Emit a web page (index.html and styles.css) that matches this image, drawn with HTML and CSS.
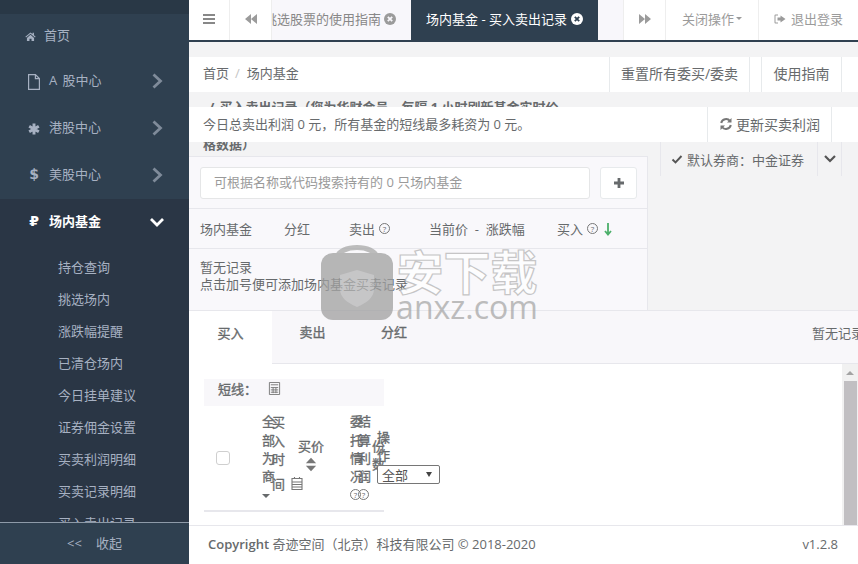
FILE: index.html
```html
<!DOCTYPE html>
<html lang="zh-CN">
  <head>
    <meta charset="UTF-8" />
    <meta name="viewport" content="width=device-width, initial-scale=1.0" />
    <title>场内基金 - 买入卖出记录</title>
    <link rel="stylesheet" href="styles.css">
  </head>
  <body>
    <!-- 左侧菜单 -->
    <aside class="sidebar">
      <div class="side-top"></div>
      <nav class="side-nav">
        <a class="nav-item nav-home">
          <svg class="nav-icon home-icon" viewBox="0 0 16 16"><path d="M8 2 0.5 8.400l1 1.100L8 4l6.500 5.500 1-1.100-2.500-2.200V2.500h-2v2zM2.800 10v4.500h3.700v-3.300h3v3.300h3.700V10L8 5.500z"/></svg>
          <span>首页</span>
        </a>
        <a class="nav-item">
          <svg class="nav-icon file-icon" viewBox="2 0 12 16"><path class="line" d="M2.600 .6h6.800l4 4v10.800H2.600zM9.400 .6v4h4"/></svg>
          <span class="nav-a">A 股中心</span>
          <svg class="nav-arrow" viewBox="0 0 12 16"><path d="M2.500 1.500 9.500 8l-7 6.500"/></svg>
        </a>
        <a class="nav-item">
          <svg class="nav-icon" viewBox="1 1 14 14"><path class="thick" d="M8 1.500v13M2.400 4.700l11.200 6.600M13.600 4.700 2.400 11.300"/></svg>
          <span>港股中心</span>
          <svg class="nav-arrow" viewBox="0 0 12 16"><path d="M2.500 1.500 9.500 8l-7 6.500"/></svg>
        </a>
        <a class="nav-item">
          <b class="nav-glyph">$</b>
          <span>美股中心</span>
          <svg class="nav-arrow" viewBox="0 0 12 16"><path d="M2.500 1.500 9.500 8l-7 6.500"/></svg>
        </a>
        <div class="nav-open">
          <a class="nav-item nav-active">
            <b class="nav-glyph">₽</b>
            <span>场内基金</span>
            <svg class="nav-arrow nav-arrow-down" viewBox="0 0 16 12"><path d="M2 3l6 6 6-6"/></svg>
          </a>
          <ul class="sub-menu">
            <li>持仓查询</li>
            <li>挑选场内</li>
            <li>涨跌幅提醒</li>
            <li>已清仓场内</li>
            <li>今日挂单建议</li>
            <li>证券佣金设置</li>
            <li>买卖利润明细</li>
            <li>买卖记录明细</li>
            <li>买入卖出记录</li>
          </ul>
        </div>
      </nav>
      <div class="side-foot"><span>&lt;&lt;</span><span>收起</span></div>
    </aside>

    <main class="main">
      <!-- 顶部页签 -->
      <header class="tabbar">
        <div class="tab-btn tab-menu">
          <svg class="ico-14" viewBox="0 0 14 14"><path class="bars" d="M1 3h12M1 7h12M1 11h12"/></svg>
        </div>
        <div class="tab-btn tab-prev">
          <svg class="ico-14" viewBox="0 0 14 14"><path class="solid" d="M7 2v10L1 7zM13 2v10L7 7z"/></svg>
        </div>
        <div class="tab tab-plain">
          <span class="tab-clip">挑选股票的使用指南</span>
          <svg class="ico-12" viewBox="0 0 12 12"><circle class="solid" cx="6" cy="6" r="6"/><path class="cross" d="M3.800 3.800l4.400 4.400M8.200 3.800 3.800 8.200"/></svg>
        </div>
        <div class="tab tab-current">
          <span>场内基金 - 买入卖出记录</span>
          <svg class="ico-12" viewBox="0 0 12 12"><circle class="solid-white" cx="6" cy="6" r="6"/><path class="cross-dark" d="M3.800 3.800l4.400 4.400M8.200 3.800 3.800 8.200"/></svg>
        </div>
        <div class="tab-space"></div>
        <div class="tab-btn tab-next">
          <svg class="ico-14" viewBox="0 0 14 14"><path class="solid" d="M1 2v10l6-5zM7 2v10l6-5z"/></svg>
        </div>
        <div class="tab-btn tab-close">关闭操作<i class="caret"></i></div>
        <div class="tab-btn tab-logout">
          <svg class="ico-12" viewBox="0 0 12 12"><path class="solid" d="M4 1.500H1.500A1 1 0 0 0 .5 2.500v7a1 1 0 0 0 1 1H4V9.500H1.500v-7H4zM6.500 2.500V4.500H3.500v3h3v2L11.500 6z"/></svg>
          退出登录
        </div>
      </header>

      <!-- 面包屑 -->
      <section class="crumb">
        <div class="crumb-path">首页<i>/</i>场内基金</div>
        <div class="crumb-actions">
          <a class="crumb-btn crumb-reset">重置所有委买/委卖</a>
          <a class="crumb-btn crumb-guide">使用指南</a>
        </div>
      </section>

      <section class="upper">
        <div class="upper-left">
          <h1 class="page-title"><em>/</em>买入卖出记录（您为华财会员，每隔 1 小时刷新基金实时价<br />格数据）</h1>
          <div class="fund-panel">
            <div class="search-row">
              <div class="search-input">可根据名称或代码搜索持有的 0 只场内基金</div>
              <div class="add-btn">
                <svg viewBox="0 0 12 12"><path d="M6 1v10M1 6h10"/></svg>
              </div>
            </div>
            <div class="fund-head">
              <span>场内基金</span>
              <span>分红</span>
              <span>卖出<i class="q">?</i></span>
              <span>当前价 &nbsp;- &nbsp;涨跌幅</span>
              <span>买入<i class="q">?</i>
                <svg class="arrow-down" viewBox="0 0 8 14"><path d="M4 1v11M1 9l3 3.500L7 9"/></svg>
              </span>
            </div>
            <div class="fund-empty">暂无记录<br />点击加号便可添加场内基金买卖记录</div>
          </div>
        </div>
        <div class="upper-right">
          <div class="broker">
            <div class="broker-name">
              <svg class="ico-12" viewBox="0 0 12 12"><path class="tick" d="M1.500 6.500 4.500 9.500 10.500 3"/></svg>
              默认券商：中金证券
            </div>
            <div class="broker-more">
              <svg viewBox="0 0 14 10"><path d="M2 2l5 5 5-5"/></svg>
            </div>
          </div>
        </div>
        <!-- 盖在标题上的利润条 -->
        <div class="profit-bar">
          <span class="profit-text">今日总卖出利润 0 元，所有基金的短线最多耗资为 0 元。</span>
          <a class="profit-btn">
            <svg class="ico-14" viewBox="0 0 14 14"><path class="refresh" d="M2.200 6A5 5 0 0 1 11 4M11.800 8A5 5 0 0 1 3 10"/><path class="solid" d="M12.500 1v4.500H8zM1.500 13V8.500H6z"/></svg>
            更新买卖利润
          </a>
        </div>
      </section>

      <!-- 买入 / 卖出 / 分红 -->
      <section class="deal-tabs">
        <a class="deal-tab deal-on">买入</a>
        <a class="deal-tab deal-sell">卖出</a>
        <a class="deal-tab">分红</a>
        <span class="deal-none">暂无记录</span>
      </section>

      <section class="deal-body">
        <div class="deal-list">
          <div class="short-bar">短线：
            <svg class="calc" viewBox="0 0 14 14"><path d="M1.500.5h11v13h-11z"/><path d="M3 3h8M3 6h8M3 8.500h8M3 11h8M5.500 6v6M8.500 6v6"/></svg>
          </div>
          <div class="deal-head">
            <i class="check"></i>
            <div class="th th-all">全部为商<i class="caret th-caret"></i></div>
            <div class="th th-time">买入时
              <div class="th-time-end">间
                <svg class="date" viewBox="0 0 12 14"><path d="M1 2.500h10v11H1z"/><path d="M1 6h10M1 8.500h10M1 11h10M3.500 1v2M8.500 1v2"/></svg>
              </div>
            </div>
            <div class="th-price">买价
              <svg class="sort" viewBox="0 0 14 16"><path d="M7 0l6 6.500H1zM7 16l-6-6.500h12z"/></svg>
            </div>
            <div class="th th-entrust">委托情况<span class="q-pair"><i class="q">?</i></span></div>
            <div class="th th-settle">结算利润<span class="q-pair"><i class="q">?</i></span></div>
            <div class="th th-share">份数</div>
            <div class="th-op">
              <div class="th">操作</div>
              <div class="select-box">全部<i class="select-arrow"></i></div>
            </div>
          </div>
        </div>
        <div class="scrollbar">
          <div class="scroll-up"><i></i></div>
          <div class="scroll-thumb"></div>
        </div>
      </section>

      <footer class="foot">
        <span>Copyright <small>奇迹空间（北京）科技有限公司 © 2018-2020</small></span>
        <span class="version">v1.2.8</span>
      </footer>
    </main>

    <!-- 水印 -->
    <div class="watermark">
      <svg class="wm-bag" viewBox="0 0 72 80">
        <path class="wm-handle" d="M16 18C18 4 54 4 56 18"/>
        <rect class="wm-box" x="0" y="13" width="72" height="67" rx="12"/>
        <path class="wm-shield" d="M36 30l17 5v14c0 9-8 14-17 18-9-4-17-9-17-18V35z"/>
      </svg>
      <div class="wm-text">
        <div class="wm-cn">安下载</div>
        <div class="wm-en">anxz.com</div>
      </div>
    </div>
  </body>
</html>
```

FILE: styles.css
```css
* {
  padding: 0;
  margin: 0;
  box-sizing: border-box;
}
body {
  width: 858px;
  height: 564px;
  display: flex;
  overflow: hidden;
  position: relative;
  background-color: #f3f3f4;
  color: #676a6c;
  font-family: "Open Sans", "Noto Sans CJK SC", sans-serif;
  font-size: 13px;
}
i,
em {
  font-style: normal;
}
ul {
  list-style: none;
}
svg {
  display: block;
  flex: none;
}
.ico-14 {
  width: 14px;
  height: 14px;
}
.ico-12 {
  width: 12px;
  height: 12px;
}
.solid {
  fill: #9b9b9b;
}
.solid-white {
  fill: #fff;
}
.cross,
.cross-dark {
  fill: none;
  stroke: #f8f7fb;
  stroke-width: 1.8;
}
.cross-dark {
  stroke: #2f4050;
}

/* 左侧菜单 */
.sidebar {
  width: 189px;
  flex: none;
  display: flex;
  flex-direction: column;
  background-color: #2f4050;
  color: #a7b1c2;
}
.side-top {
  height: 14px;
  background-color: #293846;
}
.side-nav {
  flex: 1;
  min-height: 0;
  overflow: hidden;
}
.nav-item {
  height: 47px;
  display: flex;
  align-items: center;
  padding-left: 28px;
  position: relative;
}
.nav-item span {
  padding-bottom: 5px;
}
.nav-a {
  word-spacing: 2px;
}
.nav-home {
  height: 44px;
  padding-left: 25px;
}
.nav-home span {
  padding-bottom: 3px;
}
.nav-icon {
  width: 12px;
  height: 12px;
  margin-right: 9px;
  fill: #a7b1c2;
}
.file-icon {
  height: 16px;
}
.home-icon {
  width: 11px;
  height: 11px;
  margin-right: 8px;
}
.nav-icon .line {
  fill: none;
  stroke: #a7b1c2;
  stroke-width: 1.2;
}
.nav-icon .thick {
  fill: none;
  stroke: #a7b1c2;
  stroke-width: 3.4;
}
.nav-glyph {
  width: 12px;
  margin-right: 9px;
  padding-bottom: 4px;
  font-family: "DejaVu Sans", sans-serif;
  font-size: 14px;
  text-align: center;
}
.nav-arrow {
  position: absolute;
  left: 151px;
  top: 15px;
  width: 12px;
  height: 16px;
  fill: none;
  stroke: #7f8b9a;
  stroke-width: 2.8;
}
.nav-open {
  background-color: #2a3645;
}
.nav-active {
  color: #fff;
  font-weight: 700;
}
.nav-active .nav-glyph {
  color: #fff;
}
.nav-arrow-down {
  left: 149px;
  top: 17px;
  width: 16px;
  height: 12px;
  stroke: #fff;
  stroke-width: 2.8;
}
.sub-menu {
  padding-top: 5px;
}
.sub-menu li {
  height: 32px;
  line-height: 32px;
  padding-left: 58px;
}
.side-foot {
  height: 42px;
  flex: none;
  display: flex;
  align-items: center;
  gap: 14px;
  padding-left: 67px;
  padding-bottom: 2px;
  border-top: 1px solid #8e9aa8;
  background-color: #2f4050;
}

/* 右侧主体 */
.main {
  flex: 1;
  min-width: 0;
  display: flex;
  flex-direction: column;
}
.tabbar {
  height: 42px;
  flex: none;
  display: flex;
  background-color: #fff;
  border-bottom: 2px solid #2f4050;
  margin-bottom: 15px;
}
.tab-btn {
  display: flex;
  align-items: center;
  justify-content: center;
  padding-bottom: 3px;
  color: #9b9b9b;
  border-right: 1px solid #eeeeee;
}
.tab-menu {
  width: 41px;
}
.tab-menu .bars {
  fill: none;
  stroke: #888;
  stroke-width: 2;
}
.tab-prev {
  width: 42px;
}
.tab-next {
  width: 43px;
  border-left: 1px solid #eeeeee;
}
.tab-close {
  width: 93px;
}
.tab-logout {
  flex: 1;
  gap: 5px;
  border-right: 0;
}
.caret {
  display: inline-block;
  margin-left: 2px;
  border-top: 3px solid #9b9b9b;
  border-left: 3px solid transparent;
  border-right: 3px solid transparent;
}
.tab {
  display: flex;
  align-items: center;
  gap: 3px;
  padding-bottom: 3px;
}
.tab-plain {
  width: 139px;
  padding-right: 15px;
  background-color: #f8f7fb;
  color: #888;
  justify-content: flex-end;
}
.tab-clip {
  overflow: hidden;
  white-space: nowrap;
  width: 109px;
  direction: rtl;
}
.tab-current {
  width: 187px;
  padding-left: 15px;
  gap: 4px;
  background-color: #2f4050;
  color: #fff;
}
.tab-space {
  width: 25px;
  background-color: #f8f7fb;
}

/* 面包屑 */
.crumb {
  height: 35px;
  flex: none;
  display: flex;
  justify-content: space-between;
  padding-left: 14px;
  padding-right: 16px;
  background-color: #fff;
}
.crumb-path {
  line-height: 33px;
}
.crumb-path i {
  margin: 0 7px 0 6px;
  color: #c4c4c4;
}
.crumb-actions {
  display: flex;
  gap: 11px;
}
.crumb-btn {
  font-size: 14px;
  line-height: 33px;
  text-align: center;
  border-left: 1px solid #e7eaec;
  border-right: 1px solid #e7eaec;
}
.crumb-reset {
  width: 141px;
}
.crumb-guide {
  width: 81px;
}

/* 上半部分 */
.upper {
  position: relative;
  height: 218px;
  flex: none;
  display: flex;
}
.upper-left {
  width: 459px;
  flex: none;
}
.page-title {
  height: 67px;
  margin-top: -3px;
  padding-left: 14px;
  font-size: 13px;
  line-height: 37px;
  white-space: nowrap;
}
.page-title em {
  margin: 0 5px 0 6px;
}
.fund-panel {
  height: 154px;
  background-color: #f9f8fb;
  border-top: 1px solid #e7e7ec;
  border-right: 1px solid #e7e7ec;
}
.search-row {
  height: 52px;
  display: flex;
  align-items: center;
  gap: 10px;
  padding: 0 10px 0 11px;
  border-bottom: 1px solid #e7e7ec;
}
.search-input {
  width: 390px;
  height: 32px;
  line-height: 29px;
  padding-left: 13px;
  color: #9a9a9a;
  background-color: #fff;
  border: 1px solid #e5e6e7;
  border-radius: 3px;
}
.add-btn {
  width: 37px;
  height: 32px;
  display: flex;
  align-items: center;
  justify-content: center;
  background-color: #fff;
  border: 1px solid #e7eaec;
  border-radius: 3px;
}
.add-btn svg {
  width: 12px;
  height: 12px;
  fill: none;
  stroke: #676a6c;
  stroke-width: 2.8;
}
.fund-head {
  height: 40px;
  display: grid;
  grid-template-columns: 84px 65px 80px 128px auto;
  align-items: center;
  padding-left: 11px;
  border-bottom: 1px solid #e7e7ec;
}
.fund-head span {
  display: flex;
  align-items: center;
  white-space: pre;
}
.q {
  display: inline-block;
  width: 11px;
  height: 11px;
  line-height: 9px;
  font-size: 8px;
  text-align: center;
  border: 1px solid #777;
  border-radius: 50%;
}
.fund-head .q {
  margin-left: 4px;
}
.arrow-down {
  width: 8px;
  height: 14px;
  margin-left: 6px;
  fill: none;
  stroke: #4caf6a;
  stroke-width: 1.8;
}
.fund-empty {
  padding: 10px 0 0 11px;
  line-height: 17px;
  white-space: nowrap;
}
.upper-right {
  flex: 1;
  padding: 50px 16px 0 12px;
}
.broker {
  height: 34px;
  display: flex;
  border-left: 1px solid #e7e7ec;
  border-right: 1px solid #e7e7ec;
}
.broker-name {
  width: 157px;
  display: flex;
  align-items: center;
  gap: 4px;
  padding-left: 10px;
  border-right: 1px solid #e7e7ec;
  white-space: nowrap;
}
.tick {
  fill: none;
  stroke: #555;
  stroke-width: 1.9;
}
.broker-more {
  flex: 1;
  display: flex;
  align-items: center;
  justify-content: center;
}
.broker-more svg {
  width: 14px;
  height: 10px;
  fill: none;
  stroke: #555;
  stroke-width: 2.200;
}
.profit-bar {
  position: absolute;
  top: 15px;
  left: 0;
  right: 0;
  height: 35px;
  display: flex;
  align-items: center;
  justify-content: space-between;
  padding: 0 26px 0 14px;
  background-color: #fff;
}
.profit-text {
  padding-bottom: 3px;
}
.profit-btn {
  width: 125px;
  height: 35px;
  display: flex;
  align-items: center;
  justify-content: center;
  gap: 3px;
  padding-bottom: 2px;
  font-size: 14px;
  border-left: 1px solid #e7eaec;
  border-right: 1px solid #e7eaec;
}
.profit-btn .refresh {
  fill: none;
  stroke: #777;
  stroke-width: 2;
}
.profit-btn .solid {
  fill: #777;
}

/* 买入卖出页签 */
.deal-tabs {
  height: 54px;
  flex: none;
  display: flex;
  align-items: center;
  position: relative;
  background-color: #f8f7fa;
  border-top: 1px solid #e7e7ec;
  border-bottom: 1px solid #e7e7ec;
  white-space: nowrap;
}
.deal-tab {
  width: 82px;
  height: 100%;
  display: flex;
  align-items: center;
  justify-content: center;
  padding-bottom: 11px;
  -webkit-text-stroke: 0.35px #676a6c;
}
.deal-on {
  width: 83px;
  height: 54px;
  margin-bottom: -1px;
  background-color: #fff;
}
.deal-sell {
  width: 81px;
}
.deal-none {
  position: absolute;
  left: 623px;
  top: 12px;
}
.deal-body {
  flex: 1;
  min-height: 0;
  display: flex;
  background-color: #fff;
}
.deal-list {
  flex: 1;
  padding: 15px 0 0 15px;
}
.short-bar {
  width: 180px;
  height: 27px;
  display: flex;
  align-items: center;
  padding-left: 14px;
  padding-bottom: 9px;
  background-color: #f8f7fa;
  -webkit-text-stroke: 0.35px #676a6c;
}
.calc {
  width: 13px;
  height: 13px;
  margin-left: 11px;
  fill: none;
  stroke: #777;
  stroke-width: 1;
}
.deal-head {
  width: 180px;
  height: 106px;
  display: flex;
  align-items: center;
  border-bottom: 2px solid #e7e7ec;
  white-space: normal;
}
.check {
  width: 14px;
  height: 14px;
  margin-left: 12px;
  flex: none;
  background-color: #fff;
  border: 1px solid #cfcfcf;
  border-radius: 3px;
}
.th {
  width: 14px;
  flex: none;
  line-height: 18.4px;
  -webkit-text-stroke: 0.3px #676a6c;
  word-break: break-all;
}
.th-all {
  margin-left: 32px;
}
.th-caret {
  display: block;
  width: 8px;
  margin: 8px 0 6px 0;
  border-top-width: 4px;
  border-left-width: 4px;
  border-right-width: 4px;
  border-top-color: #676a6c;
}
.th-time {
  margin-left: -4px;
  margin-bottom: 9px;
}
.th-time-end {
  display: flex;
  align-items: center;
  gap: 6px;
  margin-top: 7px;
}
.date {
  width: 12px;
  height: 14px;
  margin-bottom: 4px;
  fill: none;
  stroke: #777;
  stroke-width: 1.1;
}
.th-price {
  width: 26px;
  margin-left: 12px;
  margin-bottom: 8px;
  flex: none;
  -webkit-text-stroke: 0.3px #676a6c;
  white-space: nowrap;
  display: flex;
  flex-direction: column;
  align-items: center;
  gap: 2px;
}
.sort {
  width: 12px;
  height: 15px;
  fill: #777;
}
.th-entrust {
  margin-left: 26px;
}
.th-settle {
  margin-left: -6px;
}
.q-pair {
  display: block;
  height: 18px;
  padding-top: 3px;
}
.q-pair .q {
  display: block;
  -webkit-text-stroke: 0;
}
.th-share {
  width: 13px;
  margin-bottom: 6px;
}
.th-op {
  width: 63px;
  margin-left: -8px;
  margin-bottom: 4px;
  flex: none;
  display: flex;
  flex-direction: column;
}
.select-box {
  width: 63px;
  height: 19px;
  display: flex;
  align-items: center;
  justify-content: space-between;
  margin-top: 1px;
  padding: 0 7px 0 4px;
  color: #555;
  background-color: #fff;
  border: 1px solid #767676;
  border-radius: 2px;
}
.select-arrow {
  border-top: 5px solid #444;
  border-left: 3px solid transparent;
  border-right: 3px solid transparent;
}

/* 滚动条 */
.scrollbar {
  width: 16px;
  flex: none;
  display: flex;
  flex-direction: column;
  background-color: #f1f1f1;
}
.scroll-up {
  height: 17px;
  display: flex;
  align-items: center;
  justify-content: center;
}
.scroll-up i {
  border-bottom: 4px solid #a3a3a3;
  border-left: 4px solid transparent;
  border-right: 4px solid transparent;
}
.scroll-thumb {
  flex: 1;
  margin: 0 1px 0 2px;
  background-color: #c1bfc2;
}

/* 底部 */
.foot {
  height: 39px;
  flex: none;
  display: flex;
  align-items: center;
  justify-content: space-between;
  padding: 0 20px 3px 19px;
  font-weight: 600;
  background-color: #fff;
  border-top: 1px solid #e7e7ec;
}
.foot small {
  font-size: 13px;
  font-weight: 400;
}
.version {
  font-weight: 400;
}

/* 水印 */
.watermark {
  position: absolute;
  left: 321px;
  top: 240px;
  display: flex;
  gap: 3px;
  opacity: 0.75;
  pointer-events: none;
}
.wm-bag {
  width: 72px;
  height: 80px;
}
.wm-handle {
  fill: none;
  stroke: #a8a8a8;
  stroke-width: 5;
}
.wm-box {
  fill: #a0a0a0;
}
.wm-shield {
  fill: #c4c4c4;
  opacity: 0.6;
}
.wm-text {
  width: 142px;
  padding-top: 5px;
  text-align: center;
}
.wm-cn {
  font-family: "Noto Sans CJK SC", sans-serif;
  font-size: 47px;
  line-height: 50px;
  font-weight: 700;
  color: #fff;
  -webkit-text-stroke: 1.2px #b5b5b5;
}
.wm-en {
  font-family: "Open Sans", sans-serif;
  font-size: 32px;
  line-height: 24px;
  color: #a8a8a8;
}
```
